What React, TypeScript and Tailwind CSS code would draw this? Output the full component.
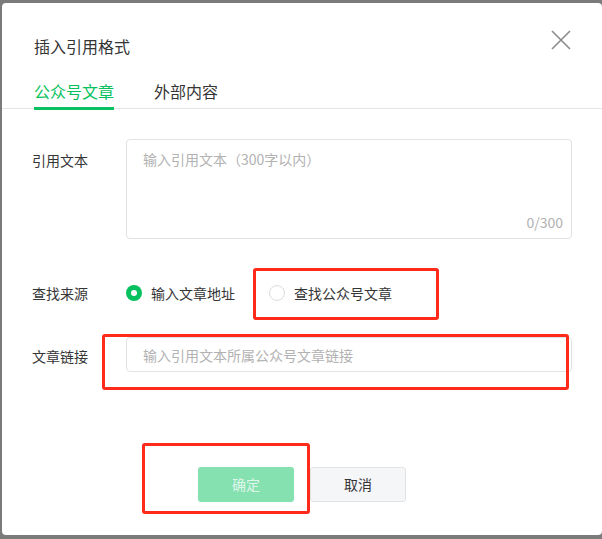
import React from "react"

function CloseIcon() {
  return (
    <svg width="20" height="20" viewBox="0 0 20 20" fill="none">
      <path d="M1 1L19 19M19 1L1 19" stroke="#8a8a8a" strokeWidth="1.6" />
    </svg>
  )
}

function Radio({ checked, label }: { checked: boolean; label: string }) {
  return (
    <label className="flex items-center gap-[9px]">
      {checked ? (
        <span className="flex h-4 w-4 items-center justify-center rounded-full bg-[#07c160]">
          <span className="h-[6px] w-[6px] rounded-full bg-white" />
        </span>
      ) : (
        <span className="h-4 w-4 rounded-full border border-[#dcdcdc] bg-white" />
      )}
      <span className="text-[14px] leading-[22px] text-[#353535]">{label}</span>
    </label>
  )
}

export default function App() {
  return (
    <div
      className="h-[539px] w-[602px] overflow-hidden bg-[#7b7b7b] pl-[2px] pt-[3px]"
      style={{ fontFamily: '"Noto Sans CJK SC", "Noto Sans", sans-serif' }}
    >
      <div className="relative h-[532px] w-[600px] rounded-[4px] bg-white">
        {/* header */}
        <div className="flex items-start justify-between pl-[32px] pr-[31px] pt-[27px]">
          <h1 className="pt-[4px] text-[16px] font-normal leading-[24px] text-[#353535]">
            插入引用格式
          </h1>
          <button type="button">
            <CloseIcon />
          </button>
        </div>

        {/* tabs */}
        <div className="mt-[21px] flex gap-[40px] border-b border-[#e5e5e5] px-[32px]">
          <div className="-mb-[2px] border-b-[3px] border-[#07c160] pb-[4px] text-[16px] leading-[24px] text-[#07c160]">
            公众号文章
          </div>
          <div className="pb-[4px] text-[16px] leading-[24px] text-[#353535]">
            外部内容
          </div>
        </div>

        {/* form */}
        <div className="px-[30px] pt-[30px]">
          <div className="flex">
            <div className="w-[94px] pt-[10px] text-[14px] leading-[22px] text-[#353535]">
              引用文本
            </div>
            <div className="flex h-[100px] w-[446px] flex-col justify-between rounded-[4px] border border-[#e2e2e2] pb-[5px] pl-[16px] pr-[8px] pt-[8px]">
              <span className="text-[14px] leading-[22px] text-[#b2b2b2]">
                输入引用文本（300字以内）
              </span>
              <span className="self-end text-[14px] leading-[22px] text-[#b2b2b2]">
                0/300
              </span>
            </div>
          </div>

          <div className="mt-[34px] flex h-[40px] items-center">
            <div className="w-[94px] text-[14px] leading-[22px] text-[#353535]">
              查找来源
            </div>
            <div className="flex items-center gap-[34px]">
              <Radio checked label="输入文章地址" />
              <Radio checked={false} label="查找公众号文章" />
            </div>
          </div>

          <div className="mt-[24px] flex items-center">
            <div className="w-[94px] pt-[3px] text-[14px] leading-[22px] text-[#353535]">
              文章链接
            </div>
            <div className="flex h-[35px] w-[446px] items-center rounded-[4px] border border-[#e2e2e2] pl-[16px]">
              <span className="text-[14px] leading-[22px] text-[#b2b2b2]">
                输入引用文本所属公众号文章链接
              </span>
            </div>
          </div>
        </div>

        {/* footer */}
        <div className="mt-[95px] flex justify-center gap-[16px]">
          <button
            type="button"
            className="h-[35px] w-[96px] rounded-[3px] bg-[#86e1b1] text-[14px] text-[#dff6ea]"
          >
            确定
          </button>
          <button
            type="button"
            className="h-[35px] w-[96px] rounded-[3px] border border-[#e2e3e5] bg-[#f5f6f8] text-[14px] text-[#353535]"
          >
            取消
          </button>
        </div>

        {/* red annotation boxes */}
        <div className="absolute left-[251px] top-[265px] h-[52px] w-[186px] rounded-[3px] border-[3px] border-[#ff2a1a]" />
        <div className="absolute left-[100px] top-[331px] h-[56px] w-[467px] rounded-[3px] border-[3px] border-[#ff2a1a]" />
        <div className="absolute left-[140px] top-[440px] h-[71px] w-[168px] rounded-[3px] border-[3px] border-[#ff2a1a]" />
      </div>
    </div>
  )
}
